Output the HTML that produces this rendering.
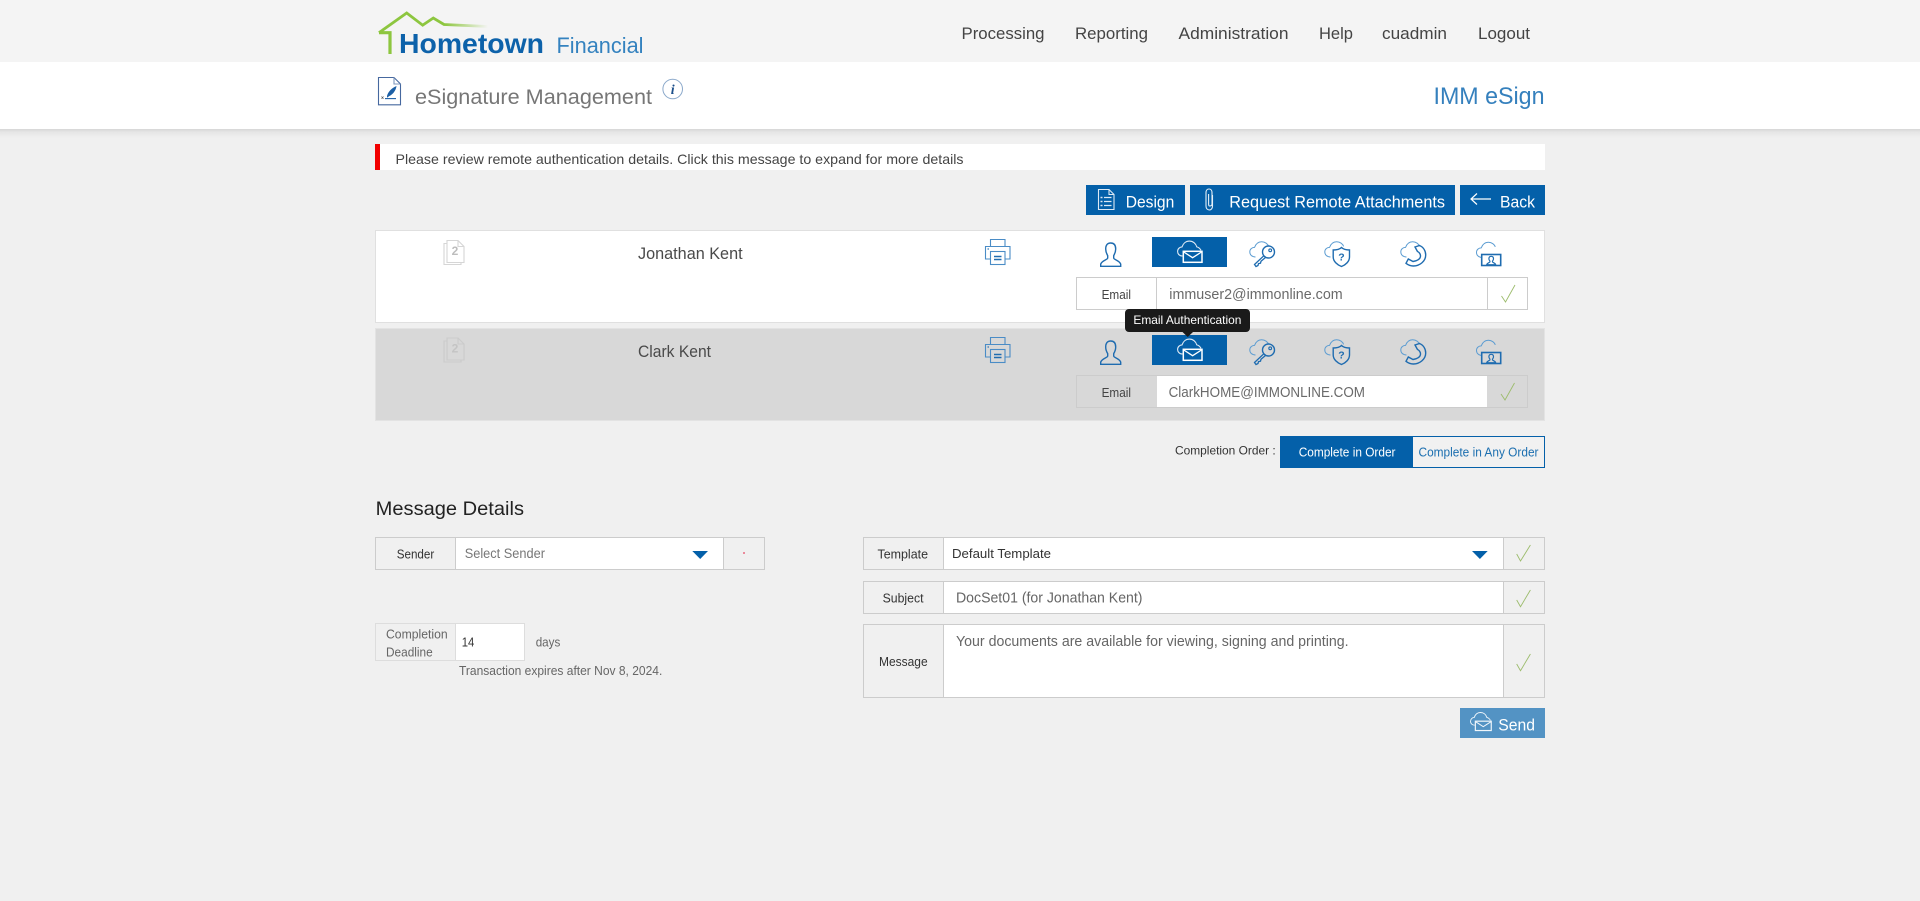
<!DOCTYPE html>
<html lang="en">
<head>
<meta charset="utf-8">
<title>eSignature Management</title>
<style>
html,body{margin:0;padding:0;background:#f0f0f0;width:1920px;height:901px;overflow:hidden}
svg{display:block}
text{font-family:"Liberation Sans",sans-serif}
.b{fill:none;stroke:#ccc;stroke-width:1;shape-rendering:crispEdges}
.r{shape-rendering:crispEdges}
.c{fill:none;stroke:#9cbc6c;stroke-width:.9}
</style>
</head>
<body>
<svg xmlns="http://www.w3.org/2000/svg" width="1920" height="901" viewBox="0 0 1920 901">
<defs>
<linearGradient id="sh" x1="0" y1="0" x2="0" y2="1"><stop offset="0" stop-color="#d6d6d6"/><stop offset=".35" stop-color="#e6e6e6"/><stop offset="1" stop-color="#f0f0f0"/></linearGradient>
<linearGradient id="rf" x1="0" y1="0" x2="1" y2="0"><stop offset="0" stop-color="#8dc63f"/><stop offset=".6" stop-color="#8dc63f"/><stop offset=".78" stop-color="#8dc63f" stop-opacity=".55"/><stop offset="1" stop-color="#8dc63f" stop-opacity="0"/></linearGradient>

<g id="i-printer" fill="none" stroke="#4a8cc6" stroke-width="1.1">
<path d="M5.5 7.5V.5H20V7.5"/>
<path d="M5.5 20H.5V7.5H25V20H20"/>
<rect x="5.5" y="12.5" width="14.5" height="13"/>
<path d="M9 17.5H16.5M9 20.5H16.5" stroke="#1f6cb0" stroke-width="1.4"/>
<path d="M2.5 10H4" stroke="#1f6cb0"/>
</g>

<path id="i-person" fill="none" stroke="#1f6cb0" stroke-width="1.4" d="M11 1C7.4 1 6 3.6 6 7C6 10 7 12 8 13.6V16C8 17.8 2 18.4 1 22.2V24.3H21V22.2C20 18.4 14 17.8 14 16V13.6C15 12 16 10 16 7C16 3.6 14.6 1 11 1Z"/>

<path id="i-cloud" fill="none" d="M6.5 16C3 16 .8 13.8 .8 11C.8 8.2 3 6.4 5.5 6.4C6.8 3 9.3 .8 12.6 .8C16.2 .8 18.8 3 19.6 5.4"/>

<g id="i-key" fill="none">
<use href="#i-cloud" stroke="#5d9dd2" stroke-width="1"/>
<circle cx="19.5" cy="11" r="6" stroke="#1f6cb0" stroke-width="1.4"/>
<circle cx="21.2" cy="9.3" r="1.4" stroke="#1f6cb0" stroke-width="1.1"/>
<path stroke="#1f6cb0" stroke-width="1.3" d="M14.8 14.8L5.5 23.5L7 25.5L9 24.5L9.5 22.6L11.5 22.2L12 20.2L16.8 16.3"/>
</g>

<g id="i-shield" fill="none">
<use href="#i-cloud" stroke="#5d9dd2" stroke-width="1"/>
<path stroke="#1f6cb0" stroke-width="1.4" d="M17.5 6.5C19.5 8.5 22.5 9 25.5 9V16C25.5 20.5 21.5 24 17.5 25.5C13.5 24 9.2 20.5 9.2 16V9C12.5 9 15.5 8.5 17.5 6.5Z"/>
<text x="17.4" y="19.5" font-size="10.5" font-weight="bold" fill="#1f6cb0" stroke="none" text-anchor="middle">?</text>
</g>

<g id="i-phone" fill="none">
<use href="#i-cloud" stroke="#5d9dd2" stroke-width="1"/>
<path stroke="#1f6cb0" stroke-width="1.4" d="M15 6L19.5 4.5C23.5 6 25.7 10 25.7 14C25.7 20 20 25 13.3 25C10 25 7.5 23.5 6 22.3L8.3 18L13 20.5C17 20 20.5 18 20.5 15C20.5 13 19 11 17.5 10.5Z"/>
</g>

<g id="i-video" fill="none">
<use href="#i-cloud" stroke="#5d9dd2" stroke-width="1"/>
<rect x="6" y="13" width="19" height="11" stroke="#1f6cb0" stroke-width="1.6"/>
<path stroke="#1f6cb0" stroke-width="1.2" d="M15.5 14.8C13.8 14.8 13.2 16 13.2 17.2C13.2 18.3 13.7 19 14.2 19.6V20.4C14.2 21 11.5 21.3 11 23.2H20C19.5 21.3 16.8 21 16.8 20.4V19.6C17.3 19 17.8 18.3 17.8 17.2C17.8 16 17.2 14.8 15.5 14.8Z"/>
</g>

<g id="i-mail" fill="none" stroke="#fff">
<path stroke-width="1.1" stroke="#dfeaf5" d="M5.5 15.5C2.5 15.5 .6 13.5 .6 11C.6 8.3 2.8 6.4 5 6.4C6.2 2.8 9 .6 12.3 .6C16 .6 18.8 3 19.8 6.4C21.5 6.8 23 8 24 9.8"/>
<rect x="6.3" y="10.8" width="18.7" height="11" stroke-width="1.5" fill="#0460a9"/>
<path stroke-width="1.3" d="M6.8 11.5L15.6 17.2L24.5 11.5"/>
</g>

<g id="i-doc2">
<path d="M3.5 0.5H14.5L20.5 6.5V22.5H3.5Z" fill="none"/>
<path d="M14.5 0.5V6.5H20.5" fill="none"/>
<path d="M3 3.5H.5V24.5H17.5V22.5" fill="none"/>
</g>
</defs>

<!-- header -->
<rect class="r" x="0" y="0" width="1920" height="62" fill="#f4f4f4"/>
<rect class="r" x="0" y="62" width="1920" height="67" fill="#fff"/>
<rect class="r" x="0" y="129" width="1920" height="9" fill="url(#sh)"/>

<!-- logo -->
<path d="M379 32.7L406.7 13L422.7 25.2L433.3 18L444 24.5L488 26.5" fill="none" stroke="url(#rf)" stroke-width="2.8"/>
<path d="M379 32.7H390V54" fill="none" stroke="#8dc63f" stroke-width="3.2"/>
<text x="399" y="53" font-size="28" font-weight="bold" fill="#0d62aa" textLength="145" lengthAdjust="spacingAndGlyphs">Hometown</text>
<text x="556.5" y="53" font-size="22" fill="#3482bf" textLength="87" lengthAdjust="spacingAndGlyphs">Financial</text>

<!-- nav -->
<g font-size="17" fill="#444">
<text x="961.5" y="39" textLength="83" lengthAdjust="spacingAndGlyphs">Processing</text>
<text x="1075" y="39" textLength="73" lengthAdjust="spacingAndGlyphs">Reporting</text>
<text x="1178.5" y="39" textLength="110" lengthAdjust="spacingAndGlyphs">Administration</text>
<text x="1319" y="39" textLength="34" lengthAdjust="spacingAndGlyphs">Help</text>
<text x="1382" y="39" textLength="65" lengthAdjust="spacingAndGlyphs">cuadmin</text>
<text x="1478" y="39" textLength="52" lengthAdjust="spacingAndGlyphs">Logout</text>
</g>

<!-- title row -->
<g fill="none" stroke="#46689f" stroke-width="1.1">
<path d="M378.5 77.5H394L400.5 84V104.8H378.5Z"/>
<path d="M394 77.5V84H400.5" stroke="#7f97bd"/>
</g>
<path d="M387 96C388 92 391.5 88 396.5 86C396 90 393.5 94 389 96.3L387 97.8Z" fill="#1c5fa5"/>
<path d="M385 98.6H396" stroke="#1c5fa5" stroke-width="1.1"/>
<path d="M381.5 96.5L383.5 98.8M383.5 96.5L381.5 98.8" stroke="#555" stroke-width=".7"/>
<text x="415" y="104" font-size="21.5" fill="#767676" textLength="237" lengthAdjust="spacingAndGlyphs">eSignature Management</text>
<circle cx="672.7" cy="89" r="9.8" fill="#fff" stroke="#8aa8ca" stroke-width="1"/>
<text x="672.7" y="94" font-size="14" font-weight="bold" font-style="italic" fill="#1c4f8a" text-anchor="middle" style="font-family:'Liberation Serif',serif">i</text>
<text x="1433.5" y="104" font-size="24" fill="#3580bd" textLength="111" lengthAdjust="spacingAndGlyphs">IMM eSign</text>

<!-- alert -->
<rect class="r" x="380" y="144" width="1165" height="26" fill="#fff"/>
<rect x="375" y="144" width="5" height="26" fill="#f20000"/>
<text x="395.5" y="164" font-size="14" fill="#444" textLength="568" lengthAdjust="spacingAndGlyphs">Please review remote authentication details. Click this message to expand for more details</text>

<!-- action buttons -->
<rect class="r" x="1086" y="185" width="99" height="30" fill="#0460a9"/>
<rect class="r" x="1190" y="185" width="265" height="30" fill="#0460a9"/>
<rect class="r" x="1460" y="185" width="85" height="30" fill="#0460a9"/>
<g fill="none" stroke="#dce9f5" stroke-width="1.1">
<path d="M1098.5 189.5H1109L1114 194.5V209.5H1098.5Z"/>
<path d="M1109 189.5V194.5H1114"/>
<path d="M1104 197.5H1111.5M1104 201.5H1111.5M1104 205.5H1111.5" stroke-width="1.2"/>
<path d="M1100.5 197.5H1102.5M1100.5 201.5H1102.5M1100.5 205.5H1102.5" stroke-width="1.4"/>
<path d="M1212.5 195V206C1212.5 208.5 1211 210 1209.5 210C1207.5 210 1206 208.5 1206 206V192.5C1206 190.5 1207.2 189 1209 189C1210.8 189 1212 190.5 1212 192.5V204C1212 205.2 1211 206 1209.5 206C1208.6 206 1208.6 205 1208.6 204V194" stroke="#e6f0f8"/>
<path d="M1471 199H1491M1477 193.5L1471 199L1477 204.5" stroke="#fff" stroke-width="1.2"/>
</g>
<g font-size="16.5" fill="#fff">
<text x="1125.7" y="207.6" textLength="48.6" lengthAdjust="spacingAndGlyphs">Design</text>
<text x="1229.3" y="207.6" textLength="215.7" lengthAdjust="spacingAndGlyphs">Request Remote Attachments</text>
<text x="1500" y="207.6" textLength="35" lengthAdjust="spacingAndGlyphs">Back</text>
</g>

<!-- row 1 -->
<rect class="r" x="375.5" y="230.5" width="1169" height="92" fill="#fff" stroke="#e0e0e0" stroke-width="1"/>
<use href="#i-doc2" x="443.5" y="240" stroke="#d6d6d6" stroke-width="1.1"/>
<text x="455" y="255" font-size="12" font-weight="bold" fill="#bdbdbd" text-anchor="middle">2</text>
<text x="638" y="259" font-size="16.5" fill="#4a4a4a" textLength="104.6" lengthAdjust="spacingAndGlyphs">Jonathan Kent</text>
<use href="#i-printer" x="985" y="239"/>
<use href="#i-person" x="1099.7" y="242"/>
<rect class="r" x="1152" y="237" width="75" height="30" fill="#0460a9"/>
<use href="#i-mail" x="1177" y="240.5"/>
<use href="#i-key" x="1249" y="241"/>
<use href="#i-shield" x="1324" y="241"/>
<use href="#i-phone" x="1400" y="241"/>
<use href="#i-video" x="1475.7" y="241.5"/>
<rect class="b" x="1076.5" y="277.5" width="451" height="32" style="fill:#fff"/>
<path class="b" d="M1156.5 277.5V309.5M1487.5 277.5V309.5"/>
<text x="1101.6" y="299" font-size="12.5" fill="#444" textLength="29.4" lengthAdjust="spacingAndGlyphs">Email</text>
<text x="1169.3" y="299" font-size="15" fill="#6a6a6a" textLength="173.4" lengthAdjust="spacingAndGlyphs">immuser2@immonline.com</text>
<path class="c" d="M1501.5 296L1505.5 302L1515 285"/>

<!-- row 2 -->
<rect class="r" x="375.5" y="328.5" width="1169" height="92" fill="#d8d8d8" stroke="#e3e3e3" stroke-width="1"/>
<use href="#i-doc2" x="443.5" y="337.5" stroke="#cbcbcb" stroke-width="1.1"/>
<text x="455" y="352.5" font-size="12" font-weight="bold" fill="#c4c4c4" text-anchor="middle">2</text>
<text x="638" y="357" font-size="16.5" fill="#4a4a4a" textLength="73" lengthAdjust="spacingAndGlyphs">Clark Kent</text>
<use href="#i-printer" x="985" y="337"/>
<use href="#i-person" x="1099.7" y="340"/>
<rect class="r" x="1152" y="335" width="75" height="30" fill="#0460a9"/>
<use href="#i-mail" x="1177" y="338.5"/>
<use href="#i-key" x="1249" y="339"/>
<use href="#i-shield" x="1324" y="339"/>
<use href="#i-phone" x="1400" y="339"/>
<use href="#i-video" x="1475.7" y="339.5"/>
<rect class="b" x="1076.5" y="375.5" width="451" height="32"/>
<rect class="r" x="1157" y="376" width="330" height="31" fill="#fff"/>
<text x="1101.6" y="397" font-size="12.5" fill="#444" textLength="29.4" lengthAdjust="spacingAndGlyphs">Email</text>
<text x="1168.6" y="397" font-size="14.5" fill="#6a6a6a" textLength="196.4" lengthAdjust="spacingAndGlyphs">ClarkHOME@IMMONLINE.COM</text>
<path class="c" d="M1501 394L1505 400L1514.5 383"/>

<!-- tooltip -->
<rect x="1125" y="309" width="125" height="23" rx="4" fill="#1a1a1a"/>
<path d="M1182.5 332L1187.7 337L1193 332Z" fill="#1a1a1a"/>
<text x="1133.4" y="324" font-size="12" fill="#fff" textLength="108" lengthAdjust="spacingAndGlyphs">Email Authentication</text>

<!-- completion order -->
<text x="1175" y="454.7" font-size="12" fill="#333" textLength="100.7" lengthAdjust="spacingAndGlyphs">Completion Order :</text>
<rect class="r" x="1280" y="436" width="133" height="32" fill="#0460a9"/>
<rect class="r" x="1412.5" y="436.5" width="132" height="31" fill="#f1f1f1" stroke="#0460a9" stroke-width="1"/>
<text x="1298.7" y="456.7" font-size="12.5" fill="#fff" textLength="96.8" lengthAdjust="spacingAndGlyphs">Complete in Order</text>
<text x="1418.5" y="456.7" font-size="12.5" fill="#1c6fb0" textLength="120" lengthAdjust="spacingAndGlyphs">Complete in Any Order</text>

<!-- message details -->
<text x="375.7" y="515" font-size="19.5" fill="#222" textLength="148.3" lengthAdjust="spacingAndGlyphs">Message Details</text>

<!-- sender -->
<rect class="r" x="456" y="538" width="267" height="31" fill="#fff"/>
<rect class="b" x="375.5" y="537.5" width="389" height="32"/>
<path class="b" d="M455.5 537.5V569.5M723.5 537.5V569.5"/>
<text x="396.7" y="558.3" font-size="13" fill="#333" textLength="37.6" lengthAdjust="spacingAndGlyphs">Sender</text>
<text x="464.7" y="558" font-size="13.5" fill="#777" textLength="80.3" lengthAdjust="spacingAndGlyphs">Select Sender</text>
<path d="M692.3 551H708L700.2 559Z" fill="#0460a9"/>
<circle cx="744" cy="553" r="1" fill="#e86a80"/>

<!-- deadline -->
<rect class="r" x="456" y="624" width="68" height="36" fill="#fff"/>
<rect x="375.5" y="623.5" width="149" height="37" fill="none" stroke="#ddd" class="r"/>
<path d="M455.5 623.5V660.5" stroke="#ddd" class="r"/>
<g font-size="12.5" fill="#666">
<text x="386" y="638.5" textLength="61.7" lengthAdjust="spacingAndGlyphs">Completion</text>
<text x="386" y="656.5" textLength="46.7" lengthAdjust="spacingAndGlyphs">Deadline</text>
<text x="535.7" y="646.7" textLength="24.6" lengthAdjust="spacingAndGlyphs">days</text>
<text x="459" y="675" textLength="203.3" lengthAdjust="spacingAndGlyphs">Transaction expires after Nov 8, 2024.</text>
</g>
<text x="461.7" y="646.7" font-size="13" fill="#333" textLength="12.6" lengthAdjust="spacingAndGlyphs">14</text>

<!-- template -->
<rect class="r" x="944" y="538" width="559" height="31" fill="#fff"/>
<rect class="b" x="863.5" y="537.5" width="681" height="32"/>
<path class="b" d="M943.5 537.5V569.5M1503.5 537.5V569.5"/>
<text x="877.5" y="558.3" font-size="13" fill="#333" textLength="50.5" lengthAdjust="spacingAndGlyphs">Template</text>
<text x="952" y="558" font-size="13" fill="#333" textLength="99" lengthAdjust="spacingAndGlyphs">Default Template</text>
<path d="M1472 551H1487.7L1479.9 559Z" fill="#0460a9"/>
<path class="c" d="M1516.7 554L1520.5 561L1530.4 545"/>

<!-- subject -->
<rect class="r" x="944" y="582" width="559" height="31" fill="#fff"/>
<rect class="b" x="863.5" y="581.5" width="681" height="32"/>
<path class="b" d="M943.5 581.5V613.5M1503.5 581.5V613.5"/>
<text x="882.6" y="602.7" font-size="13" fill="#333" textLength="40.9" lengthAdjust="spacingAndGlyphs">Subject</text>
<text x="956" y="602.7" font-size="14.5" fill="#666" textLength="186.5" lengthAdjust="spacingAndGlyphs">DocSet01 (for Jonathan Kent)</text>
<path class="c" d="M1516.7 600L1520.5 606.7L1530.4 590"/>

<!-- message -->
<rect class="r" x="944" y="625" width="559" height="72" fill="#fff"/>
<rect class="b" x="863.5" y="624.5" width="681" height="73"/>
<path class="b" d="M943.5 624.5V697.5M1503.5 624.5V697.5"/>
<text x="879" y="666" font-size="13" fill="#333" textLength="48.6" lengthAdjust="spacingAndGlyphs">Message</text>
<text x="956" y="646" font-size="14.5" fill="#666" textLength="392.6" lengthAdjust="spacingAndGlyphs">Your documents are available for viewing, signing and printing.</text>
<path class="c" d="M1516.7 664L1520.5 670.7L1530.4 654"/>

<!-- send -->
<rect class="r" x="1460" y="708" width="85" height="30" fill="#5393c4"/>
<g fill="none" stroke="#f0f6fb" transform="translate(1470 712) scale(.85)">
<path stroke-width="1.1" d="M5.5 15.5C2.5 15.5 .6 13.5 .6 11C.6 8.3 2.8 6.4 5 6.4C6.2 2.8 9 .6 12.3 .6C16 .6 18.8 3 19.8 6.4C21.5 6.8 23 8 24 9.8"/>
<rect x="6.3" y="10.8" width="18.7" height="11" stroke-width="1.4" fill="#5393c4"/>
<path stroke-width="1.2" d="M6.8 11.5L15.6 17.2L24.5 11.5"/>
</g>
<text x="1498.3" y="730.7" font-size="16.5" fill="#fff" textLength="36.7" lengthAdjust="spacingAndGlyphs">Send</text>
</svg>
</body>
</html>
